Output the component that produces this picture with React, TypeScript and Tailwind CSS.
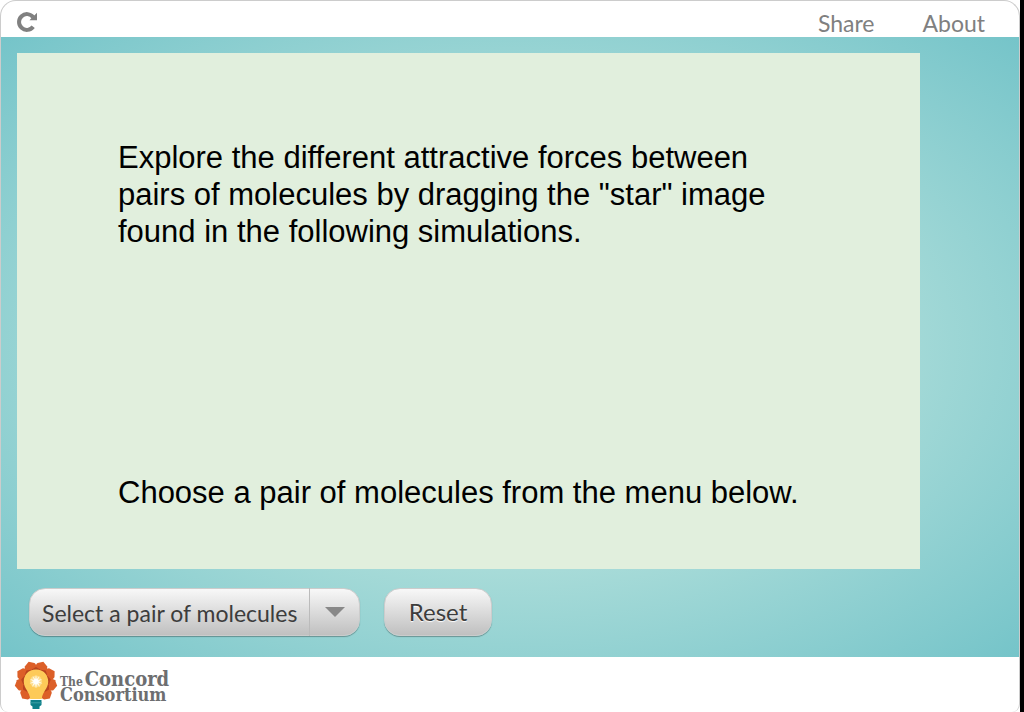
import React from "react";

const petals = [-140, -100, -60, -20, 20, 60, 100, 140];
const creases = [-120, -80, -40, 0, 40, 80, 120];

function ReloadIcon() {
  return (
    <svg viewBox="0 0 20 20" className="size-5" aria-hidden="true">
      <path d="M16.200 14.800A7.900 7.900 0 1 1 16.200 5.200" fill="none" stroke="#808080" strokeWidth="4" />
      <path d="M20 0.800V8.300H12.500L15 5.600L17 3.800Z" fill="#808080" />
    </svg>
  );
}

function Bulb() {
  return (
    <svg viewBox="0 0 44 50" className="h-[50px] w-11 shrink-0" aria-hidden="true">
      {petals.map((a) => (
        <path key={a} d="M22 22L16 10Q15.800 4.500 17 3.500L22 0.500L27 3.500Q28.200 4.500 28 10Z" fill="#dc5f28" transform={`rotate(${a} 22 22)`} />
      ))}
      {creases.map((a) => (
        <path key={a} d="M22 20L17.800 9.500L22 7L26.200 9.500Z" fill="#b8441f" transform={`rotate(${a} 22 22)`} />
      ))}
      <path d="M22 9.500C14.500 9.500 9.800 15 9.800 21.500C9.800 29 15.500 31 16.200 39H27.800C28.500 31 34.200 29 34.200 21.500C34.200 15 29.500 9.500 22 9.500Z" fill="#fdca58" />
      <circle cx="22" cy="21.500" r="6" fill="#fedd8c" />
      <path
        d="M22 15L22.800 19L25.500 16L24 20L28 19L25 21.500L28.500 23.500L24.500 23L26 27L23 24L22 28.500L21 24L18 27L19.500 23L15.500 23.500L19 21.500L16 19L20 20L18.500 16L21.200 19Z"
        fill="#fffaea"
      />
      <circle cx="22" cy="21.500" r="2.500" fill="#fff" />
      <path d="M16.500 40H27.500V45L25.500 46.500V49H18.500V46.500L16.500 45Z" fill="#0d7f88" />
      <path d="M16.500 42.800H27.500" stroke="#3d9fa6" strokeWidth="1" />
    </svg>
  );
}

export default function App() {
  return (
    <div className="min-h-screen bg-white font-[Lato,sans-serif]">
      <div className="min-h-screen border-r-4 border-black">
        <div className="flex min-h-screen flex-col overflow-hidden rounded-t-2xl rounded-b-lg border border-b-0 border-[#ccc] bg-white">
          <header className="flex h-9 items-center justify-between pr-[34px] pl-4 text-[23px] leading-8 text-[#808080]">
            <button type="button" aria-label="Reload" className="pt-1.5">
              <ReloadIcon />
            </button>
            <nav className="flex gap-12 pt-2">
              <a href="#share">Share</a>
              <a href="#about">About</a>
            </nav>
          </header>

          <main className="grow bg-[radial-gradient(ellipse_at_center,#dcf3e8_0%,#75c4c9_100%)] px-4 pt-4 pb-5">
            <section className="mr-[83px] flex h-[516px] flex-col justify-between bg-[#e1efdd] px-[101px] pt-[86px] pb-[58px] font-['Liberation_Sans',Arial,sans-serif] text-[31px] leading-[37px] text-black">
              <p className="max-w-[660px]">
                Explore the different attractive forces between pairs of molecules by dragging the "star" image found in the
                following simulations.
              </p>
              <p className="whitespace-nowrap">Choose a pair of molecules from the menu below.</p>
            </section>

            <div className="mt-[19px] flex gap-6 pl-3 text-[#3d3d3d]">
              <div className="relative">
                <select
                  aria-label="Molecule pair"
                  className="h-12 w-[331px] appearance-none rounded-2xl border border-[#ccc] bg-linear-to-b from-[#f8f8f8] to-[#c0c0c0] pt-0.5 pl-3 text-[23px] shadow-[0_1px_1px_rgba(0,0,0,0.3)]"
                >
                  <option>Select a pair of molecules</option>
                </select>
                <span className="pointer-events-none absolute inset-y-0 right-0 flex w-[51px] items-center justify-center border-l border-[#bbb]">
                  <svg viewBox="0 0 20 10" className="h-[10px] w-5" aria-hidden="true">
                    <path d="M0 0H20L10 10Z" fill="#888" />
                  </svg>
                </span>
              </div>
              <button
                type="button"
                className="h-12 w-[108px] rounded-2xl border border-[#ccc] bg-linear-to-b from-[#f8f8f8] to-[#c0c0c0] text-2xl shadow-[0_1px_1px_rgba(0,0,0,0.3)] [text-shadow:0_1px_1px_#fff]"
              >
                Reset
              </button>
            </div>
          </main>

          <footer className="flex h-[55px] items-center pl-[13px]">
            <Bulb />
            <div className="pt-1 pl-0.5 font-['DejaVu_Serif_Condensed','DejaVu_Serif',serif] font-bold text-[#6d6e70]">
              <div className="flex h-4 items-baseline gap-0.5">
                <span className="text-xs leading-4">The</span>
                <span className="text-xl leading-4">Concord</span>
              </div>
              <div className="text-lg leading-4">Consortium</div>
            </div>
          </footer>
        </div>
      </div>
    </div>
  );
}
